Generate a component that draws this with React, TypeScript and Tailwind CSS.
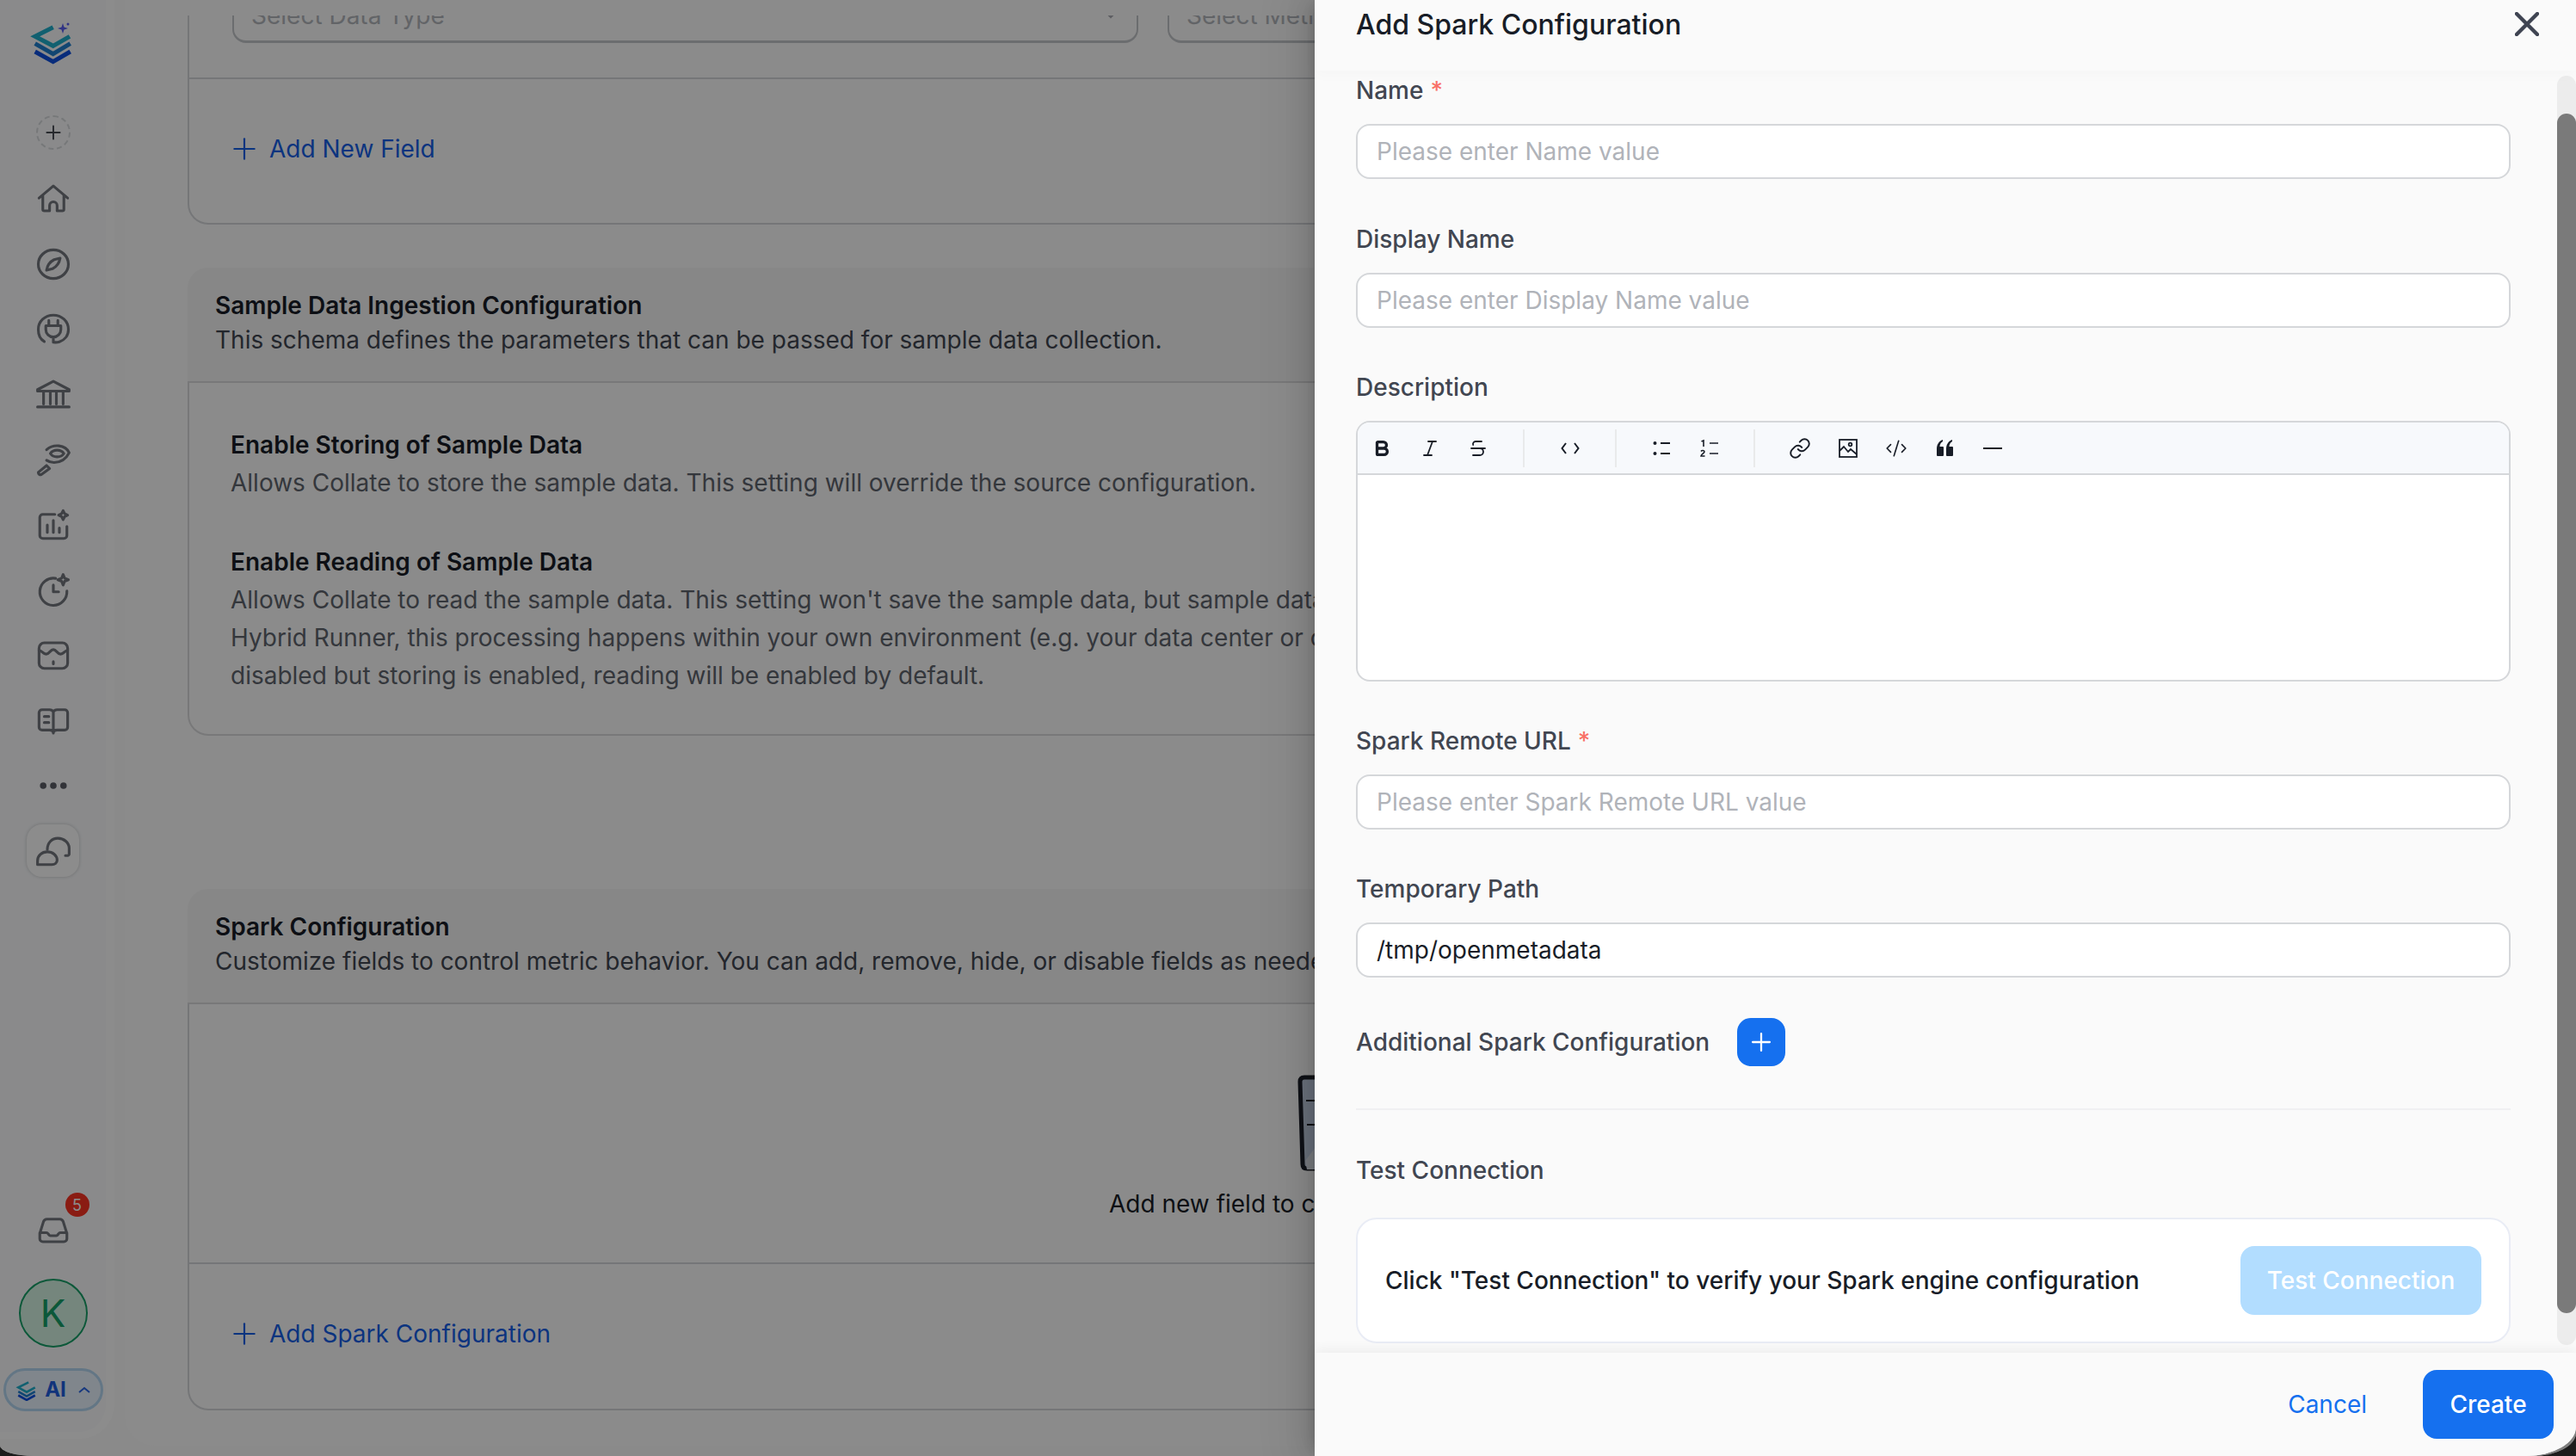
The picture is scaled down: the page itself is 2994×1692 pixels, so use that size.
import type { ReactNode } from "react";
import { Bold, Italic, Strikethrough, Link, CodeXml, Plus } from "lucide-react";

const navIcon = "h-[42px] w-[42px] fill-none stroke-[#74777f] stroke-[1.800]";

function Glyph({ children }: { children: ReactNode }) {
  return (
    <svg viewBox="0 0 24 24" className={navIcon} strokeLinecap="round" strokeLinejoin="round">
      {children}
    </svg>
  );
}

const sidebarIcons: ReactNode[] = [
  <path key="home" d="M2.500 11.500 12 3.500l9.500 8M5 9.800V19a1 1 0 0 0 1 1h3.500v-3.500a2.500 2.500 0 0 1 5 0V20H18a1 1 0 0 0 1-1V9.800" />,
  <g key="compass">
    <ellipse cx="12" cy="12" rx="10" ry="9.500" />
    <path d="M16.500 8c-.5 3-2 5.500-5 7l-4 1c.5-3 2-5.500 5-7z" />
  </g>,
  <g key="plug">
    <path d="M6 20.500C3.500 19 2 16 2 12.500 2 7 6.500 3 12 3s10 4 10 9.500c0 4-2.500 7-6 8.200-1.500.5-2.500.5-3.500.3" />
    <path d="M9 6.500V10M15 6.500V10M7 10h10v2.500a5 5 0 0 1-10 0zM12 17.500V21" />
  </g>,
  <path key="bank" d="M1.500 9 12 3.500 22.500 9v1h-21zM5.500 10v8.500M10 10v8.500M14 10v8.500M18.500 10v8.500M1.500 20.500h21" />,
  <g key="lens">
    <path d="M7.500 5.500C12 1.500 20 2 22.500 7.500c-2 4-5.500 6.500-10 6.500-2 0-3.500-.5-5-1.500" />
    <path d="M10 8c2-3 7-3 9 0-2 3-7 3-9 0z" />
    <path d="M2 20.500 7.500 16l2 2-5.500 4a1.500 1.500 0 0 1-2-1.500z" />
  </g>,
  <g key="chart">
    <path d="M13 5H5a2 2 0 0 0-2 2v12a2 2 0 0 0 2 2h14a2 2 0 0 0 2-2v-6" />
    <path d="M8 17v-5M12 17V9M16 17v-3M18.500 2.500l1 2 2 1-2 1-1 2-1-2-2-1 2-1z" />
  </g>,
  <g key="clock">
    <path d="M13.500 4.100A9 9 0 1 0 21 12.500" />
    <path d="M12 8.500V13h3.500M18.500 1.500l1 2.500 2.500 1-2.500 1-1 2.500-1-2.500-2.500-1 2.500-1z" />
  </g>,
  <g key="box">
    <rect x="2.500" y="4" width="19" height="17" rx="3.500" />
    <path d="M2.500 9c2 0 2.500 2.500 4.700 2.500S10 8.500 12 8.500s2.600 3 4.800 3S19.500 9 21.500 9M12 16.500V18" />
  </g>,
  <g key="book">
    <path d="M12 6.500C11.500 5.500 10.500 5 9.500 5h-5a2 2 0 0 0-2 2v9.500a2 2 0 0 0 2 2h5c1.500 0 2.500.5 2.500 2 0-1.500 1-2 2.500-2h5a2 2 0 0 0 2-2V7a2 2 0 0 0-2-2h-5c-1 0-2 .5-2.500 1.500zM12 6.500v14" />
    <path d="M6 9.500h3M6 13.500h3" />
  </g>,
];

function Logo() {
  return (
    <svg viewBox="0 0 84 70" className="h-[70px] w-[84px]" fill="none" strokeWidth="5">
      <path d="M41.700 21.700 20.700 32.300l21 11L61 32.300" stroke="#1fb0cc" />
      <path d="M20.700 40.700l21 12 20-12" stroke="#1f80d0" />
      <path d="M20.700 50l21 11.700L61.700 50" stroke="#1050e0" />
      <path d="M53 17l1.500 4.500L59 23l-4.500 1.500L53 29l-1.500-4.500L47 23l4.500-1.500z" fill="#5a5ff0" stroke="none" />
      <circle cx="59" cy="18" r="1.500" fill="#5a5ff0" />
    </svg>
  );
}

function Sidebar() {
  return (
    <aside className="flex h-[1672px] w-[133px] shrink-0 flex-col items-center rounded-br-[40px] border-r-[10px] border-b-[8px] border-[#ffffff] bg-[#fbfcfe] pt-[10px] pb-[24px]">
      <Logo />
      <div className="mt-[54px] flex h-[40px] w-[40px] items-center justify-center rounded-full border-2 border-dashed border-[#d8dadd]">
        <Plus className="h-[26px] w-[26px] text-[#4a4d55]" strokeWidth={1.800} />
      </div>
      <nav className="mt-[19px] flex flex-col items-center">
        {sidebarIcons.map((icon, i) => (
          <div key={i} className="flex h-[75.800px] items-center justify-center">
            <Glyph>{icon}</Glyph>
          </div>
        ))}
        <div className="flex h-[75.800px] items-center justify-center">
          <svg viewBox="0 0 38 10" className="h-[10px] w-[32px] fill-[#5b5e66]">
            <circle cx="5" cy="5" r="4.500" />
            <circle cx="19" cy="5" r="4.500" />
            <circle cx="33" cy="5" r="4.500" />
          </svg>
        </div>
        <div className="flex h-[75.800px] items-center justify-center">
          <div className="flex h-[61px] w-[61px] items-center justify-center rounded-[18px] bg-[#ffffff] shadow-[0_0_4px_rgba(0,0,0,0.2)]">
            <Glyph>
              <path d="M8 11C8 6.500 11 3.500 15 3.500s7.500 3 7.500 6.500v4c0 .5-.5 1-1 1h-1.500" />
              <path d="M1.500 21v-2.500c0-3.500 2.800-6 6.500-6s6.500 2.500 6.500 5.500c0 1.800-1.500 3-3.500 3z" />
            </Glyph>
          </div>
        </div>
      </nav>
      <div className="relative mt-auto">
        <Glyph>
          <path d="M3 14.500 5.500 6.500A2.500 2.500 0 0 1 8 5h8a2.500 2.500 0 0 1 2.500 1.500L21 14.500V18a2 2 0 0 1-2 2H5a2 2 0 0 1-2-2zM3 14h4.500c1 0 1.500 2 2.500 2h4c1 0 1.500-2 2.500-2H21" />
        </Glyph>
        <span className="absolute top-[-22px] left-[35px] flex h-[28px] w-[28px] items-center justify-center rounded-full bg-[#fb3324] text-[18px] text-[#ffffff]">
          5
        </span>
      </div>
      <div className="mt-[36px] flex h-[80px] w-[80px] items-center justify-center rounded-full border-2 border-[#17a068] bg-[#d6f5e4] text-[44px] text-[#17a068]">
        K
      </div>
      <div className="mt-[24px] flex h-[50px] w-[116px] shrink-0 items-center justify-center gap-[8px] rounded-full border-[3px] border-[#b4d8f2] bg-[#eaf4ff]">
        <svg viewBox="0 0 24 24" className="h-[26px] w-[26px]" fill="none" strokeWidth="2.400">
          <path d="M14 4 3 9.500l9 5 9-5" stroke="#1fb0cc" />
          <path d="M3 14l9 5 9-5" stroke="#1f80d0" />
          <path d="M3 18l9 5 9-5" stroke="#1050e0" />
        </svg>
        <span className="text-[24px] font-bold text-[#1f5fe0]">AI</span>
        <svg viewBox="0 0 14 8" className="ml-[6px] h-[10px] w-[14px] fill-none stroke-[#2a68e6] stroke-2">
          <path d="M1 7l6-5 6 5" />
        </svg>
      </div>
    </aside>
  );
}

function AddRow({ label }: { label: string }) {
  return (
    <div className="flex items-center gap-[9px] pl-[44px] text-[28px] leading-[44px] text-[#1560e8]">
      <Plus className="h-[40px] w-[40px]" strokeWidth={1.300} />
      {label}
    </div>
  );
}

function CardHeader({ title, desc }: { title: string; desc: string }) {
  return (
    <div className="flex h-[134px] flex-col justify-center rounded-t-[24px] border-b-2 border-[#dadbdd] bg-[#f6f6f6] pb-[4px] pl-[32px]">
      <div className="text-[28px] leading-[40px] font-semibold text-[#181d27]">{title}</div>
      <div className="text-[28px] leading-[40px] whitespace-nowrap text-[#414651]">{desc}</div>
    </div>
  );
}

function BackgroundPage() {
  return (
    <main className="ml-[12px] h-[1680px] flex-1 rounded-b-[36px] bg-[#fdfdfd] pt-[18px]">
      <div className="h-full overflow-hidden pr-[100px] pl-[73px]">
        <section className="-mt-[33px] h-[276px] rounded-b-[24px] border-x-2 border-b-2 border-[#d5d7da]">
          <div className="flex h-[107px] items-end gap-[34px] border-b-2 border-[#d5d7da] pb-[40px] pl-[50px]">
            <div className="flex h-[64px] w-[1053px] shrink-0 items-center justify-between rounded-[16px] border-2 border-b-[3px] border-[#c4c6ca] pr-[24px] pl-[20px] text-[28px] text-[#b3b6bc]">
              Select Data Type
              <svg viewBox="0 0 12 8" className="h-[8px] w-[12px] fill-none stroke-[#a9abb2] stroke-2">
                <path d="M1 1l5 5 5-5" />
              </svg>
            </div>
            <div className="flex h-[64px] w-[1053px] shrink-0 items-center rounded-[16px] border-2 border-b-[3px] border-[#c4c6ca] pl-[20px] text-[28px] text-[#b3b6bc]">
              Select Metric Type
            </div>
          </div>
          <div className="flex h-[167px] items-center pb-[5px]">
            <AddRow label="Add New Field" />
          </div>
        </section>

        <section className="mt-[50px] h-[544px]">
          <CardHeader
            title="Sample Data Ingestion Configuration"
            desc="This schema defines the parameters that can be passed for sample data collection."
          />
          <div className="h-[410px] rounded-b-[24px] border-x-2 border-b-2 border-[#dadbdd] pt-[50px] pl-[48px] text-[28px] leading-[44px]">
            <div className="font-semibold text-[#181d27]">Enable Storing of Sample Data</div>
            <div className="text-[#5f646e]">
              Allows Collate to store the sample data. This setting will override the source configuration.
            </div>
            <div className="mt-[48px] font-semibold text-[#181d27]">Enable Reading of Sample Data</div>
            <div className="whitespace-nowrap text-[#5f646e]">
              <div>Allows Collate to read the sample data. This setting won't save the sample data, but sample data</div>
              <div>Hybrid Runner, this processing happens within your own environment (e.g. your data center or cloud)</div>
              <div>disabled but storing is enabled, reading will be enabled by default.</div>
            </div>
          </div>
        </section>

        <section className="mt-[178px] h-[606px]">
          <CardHeader
            title="Spark Configuration"
            desc="Customize fields to control metric behavior. You can add, remove, hide, or disable fields as needed."
          />
          <div className="h-[472px] rounded-b-[24px] border-x-2 border-b-2 border-[#d5d7da]">
            <div className="relative h-[302px] border-b-2 border-[#d5d7da] pt-[210px] pl-[1069px] text-[28px] leading-[44px] whitespace-nowrap text-[#181d27]">
              <svg viewBox="0 0 60 124" className="absolute top-[82px] left-[1287px] h-[124px] w-[60px]">
                <path d="M4 8q0-5 5-5h50v106H12q-5 0-5-5z" fill="#c3d0e3" stroke="#1c2029" strokeWidth="5" />
                <path d="M11 30h30M12 58h30" stroke="#1c2029" strokeWidth="2" />
                <path d="M10 100l30-40v50H12z" fill="#e0e6ef" />
              </svg>
              Add new field to customize
            </div>
            <div className="flex h-[168px] items-center pb-[7px]">
              <AddRow label="Add Spark Configuration" />
            </div>
          </div>
        </section>
      </div>
    </main>
  );
}

function Label({ text, required }: { text: string; required?: boolean }) {
  return (
    <label className="mb-[17px] flex h-[44px] items-center text-[28px] font-medium text-[#414651]">
      {text}
      {required && <span className="ml-[8px] text-[#f97066]">*</span>}
    </label>
  );
}

const inputCls =
  "block h-[64px] w-full rounded-[16px] border-2 border-[#d5d7da] bg-white px-[22px] text-[28px] text-[#181d27] outline-none placeholder:text-[#b0b3b9]";

function TextField({ label, required, mt }: { label: string; required?: boolean; mt: string }) {
  return (
    <div className={mt}>
      <Label text={label} required={required} />
      <input className={inputCls} placeholder={`Please enter ${label} value`} readOnly />
    </div>
  );
}

function ToolBtn({ children }: { children: ReactNode }) {
  return <div className="flex h-full w-[56px] items-center justify-center text-[#181d27]">{children}</div>;
}

function ToolSep({ margin }: { margin: string }) {
  return <div className={`h-[44px] w-[2px] bg-[#e9eaeb] ${margin}`} />;
}

function Toolbar() {
  const small = "h-[24px] w-[24px]";
  return (
    <div className="flex h-[61px] items-center border-b-2 border-[#d5d7da] bg-[#f7f9fc]">
      <ToolBtn>
        <Bold className="h-[22px] w-[22px]" strokeWidth={3.600} />
      </ToolBtn>
      <ToolBtn>
        <Italic className={small} strokeWidth={1.800} />
      </ToolBtn>
      <ToolBtn>
        <Strikethrough className={small} strokeWidth={1.800} />
      </ToolBtn>
      <ToolSep margin="ml-[24px] mr-[25px]" />
      <ToolBtn>
        <svg viewBox="0 0 24 24" className={`${small} fill-none stroke-current stroke-2`}>
          <path d="M7 6 2.500 12 7 18M17 6l4.500 6-4.500 6" />
        </svg>
      </ToolBtn>
      <ToolSep margin="ml-[24px] mr-[24px]" />
      <ToolBtn>
        <svg viewBox="0 0 24 24" className={`${small} fill-none stroke-current stroke-2`}>
          <circle cx="4.500" cy="6" r="2" fill="currentColor" stroke="none" />
          <circle cx="4.500" cy="18" r="2" fill="currentColor" stroke="none" />
          <path d="M11 6h11M11 18h11" />
        </svg>
      </ToolBtn>
      <ToolBtn>
        <svg viewBox="0 0 24 24" className={`${small} fill-none stroke-current stroke-2`}>
          <path d="M2.500 4 5 3v7M12 6h10M12 18h10" strokeWidth="1.600" />
          <path d="M2 15.500c1-1.500 4-1.500 4 .5 0 1.500-4 3-4 5h4.500" strokeWidth="1.600" />
        </svg>
      </ToolBtn>
      <ToolSep margin="ml-[23px] mr-[24px]" />
      <ToolBtn>
        <Link className="h-[26px] w-[26px]" strokeWidth={1.800} />
      </ToolBtn>
      <ToolBtn>
        <svg viewBox="0 0 24 24" className={`${small} fill-none stroke-current stroke-[1.800]`}>
          <rect x="2" y="2" width="20" height="20" />
          <circle cx="14.500" cy="7.500" r="1.800" />
          <path d="M2 15l5-5 5 6 3-3 7 6" />
        </svg>
      </ToolBtn>
      <ToolBtn>
        <CodeXml className="h-[26px] w-[26px]" strokeWidth={1.500} />
      </ToolBtn>
      <ToolBtn>
        <svg viewBox="0 0 24 24" className={`${small} fill-current`}>
          <path d="M3 13c0-5 2-9 7-11v2c-2.500 1.500-3.500 4-3.500 6H10a1 1 0 0 1 1 1v9a1 1 0 0 1-1 1H4a1 1 0 0 1-1-1zM14 13c0-5 2-9 7-11v2c-2.500 1.500-3.500 4-3.500 6H21a1 1 0 0 1 1 1v9a1 1 0 0 1-1 1h-6a1 1 0 0 1-1-1z" />
        </svg>
      </ToolBtn>
      <ToolBtn>
        <svg viewBox="0 0 24 24" className={`${small} stroke-current stroke-2`}>
          <path d="M1 12h22" />
        </svg>
      </ToolBtn>
    </div>
  );
}

function Drawer() {
  return (
    <div className="absolute top-0 right-0 bottom-0 flex w-[1466px] flex-col rounded-br-[58px_34px] bg-[#fafafa] shadow-[-6px_0_16px_-8px_rgba(0,0,0,0.16),-9px_0_28px_0_rgba(0,0,0,0.1),-12px_0_48px_16px_rgba(0,0,0,0.06)]">
      <header className="relative z-10 flex h-[82px] shrink-0 items-start justify-between bg-[#fafafa] pt-[5px] pr-[43px] pl-[48px] shadow-[0_4px_16px_rgba(0,0,0,0.025)]">
        <h1 className="text-[32px] leading-[48px] font-medium text-[#181d27]">Add Spark Configuration</h1>
        <svg viewBox="0 0 28 28" className="mt-[9px] h-[28px] w-[28px] fill-none stroke-[#3f4452] stroke-[4.400]" strokeLinecap="round">
          <path d="M2 2l24 24M26 2 2 26" />
        </svg>
      </header>

      <div className="flex min-h-0 flex-1">
        <form className="w-[1390px] shrink-0 pt-[1px] pl-[48px]">
          <TextField label="Name" required mt="mt-0" />
          <TextField label="Display Name" mt="mt-[48px]" />
          <div className="mt-[47px]">
            <Label text="Description" />
            <div className="h-[303px] overflow-hidden rounded-[16px] border-2 border-[#d5d7da] bg-white">
              <Toolbar />
            </div>
          </div>
          <TextField label="Spark Remote URL" required mt="mt-[47px]" />
          <div className="mt-[47px]">
            <Label text="Temporary Path" />
            <input className={inputCls} defaultValue="/tmp/openmetadata" readOnly />
          </div>
          <div className="mt-[47px] flex items-center gap-[32px]">
            <span className="text-[28px] font-medium text-[#414651]">Additional Spark Configuration</span>
            <div className="flex h-[56px] w-[56px] items-center justify-center rounded-[16px] bg-[#1570ef]">
              <Plus className="h-[34px] w-[34px] text-white" strokeWidth={1.600} />
            </div>
          </div>
          <div className="mt-[49px] h-[2px] bg-[#f0f0f2]" />
          <div className="mt-[48px] text-[28px] leading-[44px] font-medium text-[#414651]">Test Connection</div>
          <div className="mt-[33px] flex h-[146px] items-center justify-between rounded-[24px] border-2 border-[#e9ecf5] bg-white pr-[32px] pl-[32px]">
            <span className="text-[28px] font-medium text-[#181d27]">
              Click "Test Connection" to verify your Spark engine configuration
            </span>
            <div className="flex h-[80px] w-[280px] items-center justify-center rounded-[16px] bg-[#b2ddff] text-[28px] font-medium text-white">
              Test Connection
            </div>
          </div>
        </form>
        <div className="mt-[6px] mb-[9px] ml-[54px] flex w-[22px] shrink-0 flex-col rounded-full bg-[#ececec] pt-[44px] pb-[37px]">
          <div className="flex-1 rounded-full bg-[#7a7a7a]" />
        </div>
      </div>

      <footer className="relative z-10 flex h-[120px] shrink-0 items-center justify-end gap-[65px] rounded-br-[58px_34px] bg-[#fafafa] pr-[26px] shadow-[0_-4px_14px_rgba(0,0,0,0.05)]">
        <span className="text-[28px] text-[#1570ef]">Cancel</span>
        <div className="flex h-[80px] w-[152px] items-center justify-center rounded-[16px] bg-[#1570ef] text-[28px] font-medium text-white">
          Create
        </div>
      </footer>
    </div>
  );
}

export default function App() {
  return (
    <div className="h-[1692px] w-[2994px] overflow-hidden bg-[#1c1c1c] font-[Inter,sans-serif]">
      <div className="relative h-full w-full overflow-hidden rounded-br-[50px_27px] rounded-bl-[40px_12px] bg-[#fcfcfc]">
        <div className="flex h-full">
          <Sidebar />
          <BackgroundPage />
        </div>
        <div className="absolute inset-0 bg-black/45" />
        <Drawer />
      </div>
    </div>
  );
}
